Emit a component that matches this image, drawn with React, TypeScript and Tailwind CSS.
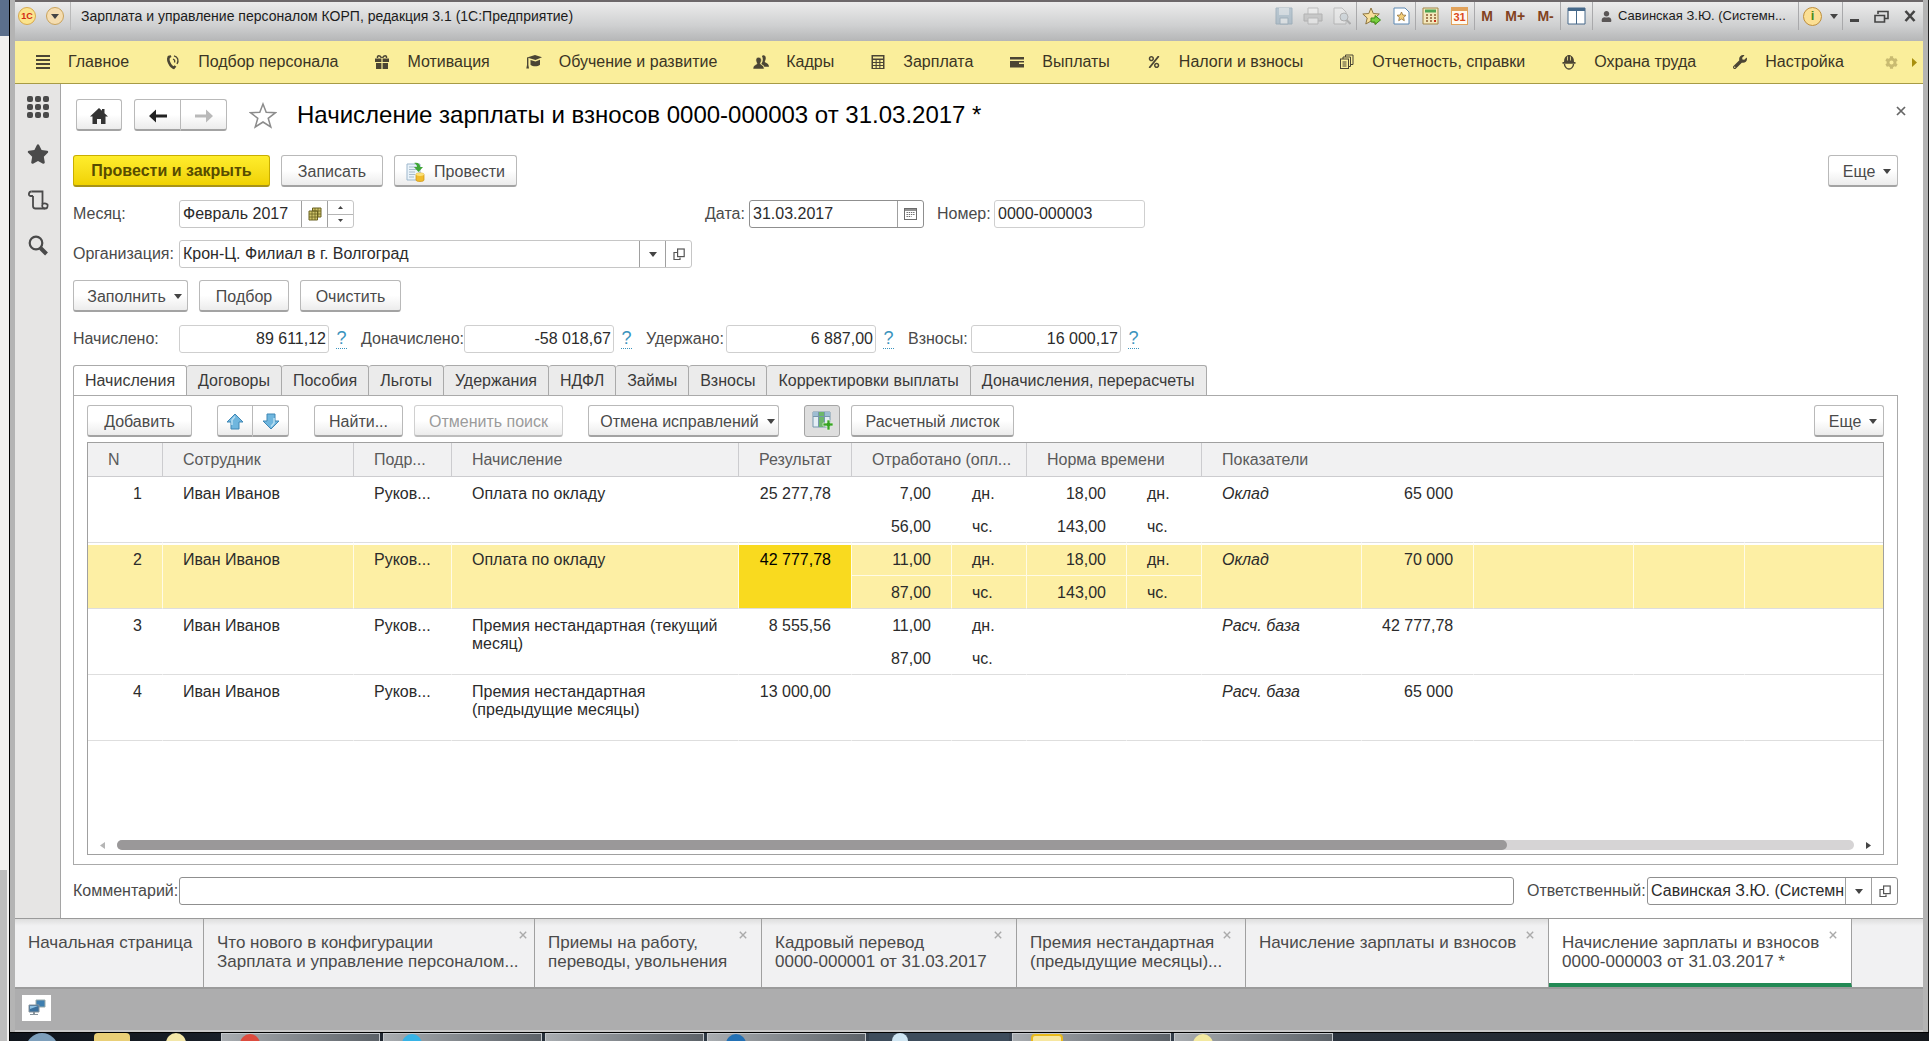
import type { ReactNode } from 'react'
import { FaStar, FaPercent, FaWrench, FaCog, FaUser } from 'react-icons/fa'
import { clsx } from 'clsx'

/* ---------- icons ---------- */

const Caret = () => (
  <svg width="8" height="5" viewBox="0 0 8 5" className="shrink-0">
    <path d="M0 0h8L4 5z" fill="#444" />
  </svg>
)

const OpenIcon = () => (
  <svg width="12" height="13" viewBox="0 0 12 13" fill="none" stroke="#555" strokeWidth="1.2">
    <rect x="4.6" y="1" width="6.6" height="7.6" />
    <path d="M4 4.5H1v7h6V9.5" />
  </svg>
)

const CloseIcon = ({ size, color }: { size: number; color: string }) => (
  <svg width={size} height={size} viewBox="0 0 8 8" stroke={color} strokeWidth="1.4">
    <path d="M.8.8l6.4 6.4M7.2.8L.8 7.2" />
  </svg>
)

const MenuIcon = () => (
  <svg width="16" height="16" viewBox="0 0 16 16" fill="#4b4534">
    <path d="M1 1h14v2H1zM1 5h14v2H1zM1 9h14v2H1zM1 13h14v2H1z" />
  </svg>
)

const PhoneIcon = () => (
  <svg width="16" height="16" viewBox="0 0 16 16" fill="none" stroke="#4b4534">
    <path d="M4.5 2.5C1.5 5 5 13 9.500 14" strokeWidth="2.600" />
    <path d="M3 3.500l3-1.500M8 14.500l2.500-2.500" strokeWidth="2.400" />
    <path d="M8 5c1.500.5 2 2 1.500 3.500M9 1.800c4 .8 5 5 3 8.200" strokeWidth="1.300" />
  </svg>
)

const GiftIcon = () => (
  <svg width="16" height="16" viewBox="0 0 16 16" fill="#4b4534">
    <path d="M1 4.500h6.400V8H1zM8.600 4.500H15V8H8.600zM2 9h5.400v6H2zM8.600 9H14v6H8.600z" />
    <path d="M7.400 4C6.500 1 3 .8 3.500 4M8.600 4C9.500 1 13 .8 12.500 4" fill="none" stroke="#4b4534" strokeWidth="1.500" />
  </svg>
)

const CapIcon = () => (
  <svg width="16" height="16" viewBox="0 0 16 16" fill="#4b4534">
    <path d="M1 3.500L9 1l7 2.300L9.500 6z" />
    <path d="M4.500 6l5 1.500L14 5.700v5c-2.500 2-7 2-9.500 0z" />
    <path d="M1 3.500h1.400V11L3 14.500H.3L1 11z" />
  </svg>
)

const PeopleIcon = () => (
  <svg width="17" height="16" viewBox="0 0 17 16" fill="#4b4534">
    <path d="M9.500 1.500c2-1.500 4.500 0 4 3-.2 1.800-.8 2.300-1 3.200 0 1 4.500 1.300 4.500 5.300h-5c-.5-1.500-2-2.300-3.200-3 1.800-2 2.200-6 .7-8.500z" />
    <path d="M6 3c2.300 0 3.200 2 2.800 4-.2 1.200-.8 1.700-1 2.500 0 1.500 4 1.500 4 6H0c0-4.500 4-4.500 4.200-6-.2-.8-.8-1.300-1-2.500C2.800 5 3.700 3 6 3z" stroke="#faee9b" strokeWidth=".6" />
  </svg>
)

const CalcIcon = () => (
  <svg width="16" height="16" viewBox="0 0 16 16">
    <path d="M1.500 1h13v14h-13z" fill="#4b4534" />
    <path
      d="M3 2.500h10v2H3zM3 6h2.600v2H3zM6.700 6h2.600v2H6.700zM10.400 6H13v2h-2.600zM3 9h2.600v2H3zM6.700 9h2.600v2H6.700zM10.400 9H13v2h-2.600zM3 12h2.600v2H3zM6.700 12h2.600v2H6.700zM10.400 12H13v2h-2.600z"
      fill="#faee9b"
    />
  </svg>
)

const CardIcon = () => (
  <svg width="16" height="16" viewBox="0 0 16 16" fill="#4b4534">
    <path d="M1 3h14v2.500H1zM1 7h14v6.500H1z" />
    <path d="M10 8.500h5v1.500h-5z" fill="#faee9b" />
  </svg>
)

const ReportIcon = () => (
  <svg width="16" height="16" viewBox="0 0 16 16" fill="none" stroke="#4b4534">
    <rect x="1.500" y="5" width="8" height="9.500" />
    <path d="M4 5V3h7.500v9.500H10M6.500 3V1H14v9.500h-2M3.500 8h4M3.500 10h4M3.500 12h4" />
  </svg>
)

const HelmetIcon = () => (
  <svg width="14" height="16" viewBox="0 0 14 16">
    <path d="M2 8c0-4 1.500-6 3.500-6.500V1h3v.5C10.500 2 12 4 12 8h1.500v1.800H.5V8z" fill="#4b4534" />
    <path d="M5.500 2.500v4M8.500 2.500v4" stroke="#faee9b" strokeWidth=".8" />
    <path d="M2.500 10c0 3 2.500 5 4.500 5s4.500-2 4.500-5" fill="none" stroke="#4b4534" strokeWidth="1.400" />
  </svg>
)

const HomeIcon = () => (
  <svg width="18" height="16" viewBox="0 0 18 16" fill="#333">
    <path d="M9 0l3 2.800V1h2.500v4.200L18 8.500h-2.500V16h-4.500v-5H7v5H2.500V8.500H0z" />
  </svg>
)

const StarOutline = () => (
  <svg width="28" height="27" viewBox="0 0 28 27" fill="none" stroke="#8c8c8c" strokeWidth="1.500">
    <path d="M14 2l3.200 8.300 9.300.4-7.300 5.600 2.600 8.700L14 20l-7.800 5 2.600-8.700-7.300-5.600 9.300-.4z" />
  </svg>
)

const GridIcon = () => (
  <svg width="22" height="22" viewBox="0 0 22 22" fill="#4a4a4a">
    {[3, 11, 19].map((y) => [3, 11, 19].map((x) => <rect key={`${x}${y}`} x={x - 3} y={y - 3} width="6" height="6" rx="2" />))}
  </svg>
)

const ScrollIcon = () => (
  <svg width="22" height="20" viewBox="0 0 22 20" fill="none" stroke="#4a4a4a" strokeWidth="1.800">
    <path d="M6 6V16c0 1.800 1 2.500 2.500 2.500H18M4.500 1.500h11v12.500" />
    <path d="M4.500 1.500C1.500 1.500 1 6 3.500 6H6M15.500 14c-1 3 .5 4.500 2.500 4.500s3-1 2.500-4c-1.500-1-3.500-1.500-5-.5z" />
  </svg>
)

const SearchIcon = () => (
  <svg width="20" height="21" viewBox="0 0 20 21" fill="none" stroke="#4a4a4a">
    <circle cx="8" cy="8" r="6.300" strokeWidth="2.200" />
    <path d="M12.500 13l6 6" strokeWidth="4" />
  </svg>
)

const ArrowIcon = ({ color, flip }: { color: string; flip?: boolean }) => (
  <svg width="18" height="14" viewBox="0 0 18 14" className={clsx(flip && 'rotate-180')}>
    <path d="M0 7l7-6.500v5h11v3H7v5z" fill={color} />
  </svg>
)

const BlueArrow = ({ down }: { down?: boolean }) => (
  <svg width="18" height="17" viewBox="0 0 18 17" className={clsx(down && 'rotate-180')}>
    <path d="M9 1l8 8h-4v7H5V9H1z" fill="#6fb6de" stroke="#3f87b5" />
    <path d="M9 3.500L6 7v5" stroke="#b9dff2" strokeWidth="1.500" fill="none" />
  </svg>
)

const PostIcon = () => (
  <svg width="19" height="20" viewBox="0 0 19 20">
    <path d="M1 2h13v16H1z" fill="#eaf3fa" stroke="#9db7cc" />
    <path d="M3 5h8M3 7.500h8M3 10h6M3 12.500h6M3 15h5" stroke="#a8bccb" />
    <path d="M8 1c4-1 6 1 6.200 4H17l-4.500 5L8 5h3c0-2-1-3-3-4z" fill="#3fa535" />
    <path d="M10 12.500c0-2 8-2 8 0V18c0 2-8 2-8 0z" fill="#f0bc2e" stroke="#cf9413" strokeWidth=".7" />
    <ellipse cx="14" cy="12.500" rx="4" ry="1.400" fill="#fbe27a" />
  </svg>
)

const TableAddIcon = () => (
  <svg width="21" height="20" viewBox="0 0 21 20">
    <path d="M1 1h17v15H1z" fill="#e4eef5" stroke="#7697ad" />
    <path d="M1 1h17v4H1z" fill="#9dbdd2" />
    <path d="M7 1h5v15H7z" fill="#6cb76a" />
    <path d="M1 5.500h17M6.500 1v15M12.500 1v15" stroke="#7697ad" />
    <path d="M15 9h3v3h3v3h-3v4h-3v-4h-4v-3h4z" fill="#37a423" stroke="#e5f5e1" strokeWidth=".7" />
  </svg>
)

const SheetsIcon = () => (
  <svg width="14" height="14" viewBox="0 0 14 14" stroke="#6b6222">
    <path d="M4.500 1h8.500v9H4.500z" fill="#cfc46a" />
    <path d="M1 4h8.500v9H1z" fill="#cfc46a" />
    <path d="M1 7h12M1 10h8.500M4 4v9M7 1v12M10 1v9M4.500 4H13" strokeWidth=".8" />
  </svg>
)

const CalendarIcon = () => (
  <svg width="13" height="12" viewBox="0 0 13 12" fill="none" stroke="#6b6b6b">
    <rect x=".5" y=".5" width="12" height="11" />
    <path d="M1 2h11" strokeWidth="1.500" />
    <path d="M2.500 4.500h8M2.500 6.500h8M2.500 8.500h5" strokeDasharray="1.400 .8" />
  </svg>
)

const Logo = () => (
  <span className="flex size-[18px] items-center justify-center rounded-full border border-[#d8a94e] bg-[#fbe48c] text-[9px] font-bold text-[#d22a14]">
    1С
  </span>
)

/* ---------- shared controls ---------- */

const buttonBase =
  'flex h-8 shrink-0 items-center justify-center rounded-[3px] border border-b-2 bg-linear-to-b from-white from-50% to-[#ececec] whitespace-nowrap pt-0.5'

function Button({ children, className, disabled, label }: { children: ReactNode; className?: string; disabled?: boolean; label?: string }) {
  return (
    <button
      type="button"
      disabled={disabled}
      aria-label={label}
      className={clsx(
        buttonBase,
        className,
        disabled ? 'border-[#d0d0d0] border-b-[#bdbdbd] text-[#9b9b9b]' : 'border-[#b9b9b9] border-b-[#a3a3a3] text-[#4a4a4a]',
      )}
    >
      {children}
    </button>
  )
}

const boxBase = 'flex h-7 items-stretch overflow-hidden rounded-[3px] border bg-white text-[#2b2b2b]'
const cellBase = 'flex w-[26px] shrink-0 items-center justify-center border-l border-[#a0a0a0]'

function Total({ id, label, value, className }: { id: string; label: string; value: string; className?: string }) {
  return (
    <div className="flex items-center">
      <label htmlFor={id} className={className}>
        {label}
      </label>
      <input id={id} readOnly defaultValue={value} className="h-7 w-[150px] rounded-[3px] border border-[#cfcfcf] bg-white pr-0.5 text-right text-[#2b2b2b]" />
      <a href="#" className="mr-[14px] ml-[7px] h-5 w-[11px] border-b border-dotted border-[#3a93bd] text-center text-[18px] leading-[18px] text-[#3a93bd]">
        ?
      </a>
    </div>
  )
}

/* ---------- data ---------- */

const sections: { icon: ReactNode; title: string }[] = [
  { icon: <MenuIcon />, title: 'Главное' },
  { icon: <PhoneIcon />, title: 'Подбор персонала' },
  { icon: <GiftIcon />, title: 'Мотивация' },
  { icon: <CapIcon />, title: 'Обучение и развитие' },
  { icon: <PeopleIcon />, title: 'Кадры' },
  { icon: <CalcIcon />, title: 'Зарплата' },
  { icon: <CardIcon />, title: 'Выплаты' },
  { icon: <FaPercent size={12} />, title: 'Налоги и взносы' },
  { icon: <ReportIcon />, title: 'Отчетность, справки' },
  { icon: <HelmetIcon />, title: 'Охрана труда' },
  { icon: <FaWrench size={14} />, title: 'Настройка' },
]

const tabs = [
  'Начисления',
  'Договоры',
  'Пособия',
  'Льготы',
  'Удержания',
  'НДФЛ',
  'Займы',
  'Взносы',
  'Корректировки выплаты',
  'Доначисления, перерасчеты',
]

const rows = [
  { n: 1, kind: 'Оплата по окладу', result: '25 277,78', days: '7,00', hours: '56,00', normDays: '18,00', normHours: '143,00', name: 'Оклад', value: '65 000' },
  { n: 2, kind: 'Оплата по окладу', result: '42 777,78', days: '11,00', hours: '87,00', normDays: '18,00', normHours: '143,00', name: 'Оклад', value: '70 000', selected: true },
  { n: 3, kind: 'Премия нестандартная (текущий месяц)', result: '8 555,56', days: '11,00', hours: '87,00', name: 'Расч. база', value: '42 777,78' },
  { n: 4, kind: 'Премия нестандартная (предыдущие месяцы)', result: '13 000,00', name: 'Расч. база', value: '65 000' },
]

const openWindows = [
  { title: 'Начальная страница', width: 'w-[189px]' },
  { title: 'Что нового в конфигурации\nЗарплата и управление персоналом...', width: 'w-[331px]', closable: true },
  { title: 'Приемы на работу,\nпереводы, увольнения', width: 'w-[227px]', closable: true },
  { title: 'Кадровый перевод\n0000-000001 от 31.03.2017', width: 'w-[255px]', closable: true },
  { title: 'Премия нестандартная\n(предыдущие месяцы)...', width: 'w-[229px]', closable: true },
  { title: 'Начисление зарплаты и взносов', width: 'w-[303px]', closable: true },
  { title: 'Начисление зарплаты и взносов\n0000-000003 от 31.03.2017 *', width: 'w-[303px]', closable: true, active: true },
]

/* ---------- page parts ---------- */

function TitleBar() {
  const group = 'flex h-7 items-center justify-around border-l border-[#a9a9ab]'
  return (
    <header className="flex h-[41px] items-start border-t-2 border-[#6d686a] bg-linear-to-b from-[#ececec] via-[#cfd0d1] via-60% to-[#b5b6b7] text-sm text-[#1c1c1c]">
      <div className="flex h-7 items-center gap-1.5 pl-[3px]">
        <Logo />
        <button type="button" aria-label="Меню" className="ml-1 flex size-[18px] items-center justify-center rounded-full border border-[#c9a35c] bg-[#f5ddb0]">
          <Caret />
        </button>
        <h1 className="flex h-7 items-center border-l border-[#b9b9b9] pl-2.5 whitespace-nowrap">
          Зарплата и управление персоналом КОРП, редакция 3.1 (1С:Предприятие)
        </h1>
      </div>
      <div className="ml-auto flex">
        <div className="flex h-7 w-[86px] items-center justify-around opacity-50">
          <svg width="18" height="18" viewBox="0 0 18 18">
            <path d="M1 1h16v16H1z" fill="#8fabbf" stroke="#6d8ba1" />
            <path d="M4 1h10v7H4z" fill="#c9d7e0" />
            <path d="M5 11h8v6H5z" fill="#dfe7ec" stroke="#6d8ba1" />
          </svg>
          <svg width="20" height="18" viewBox="0 0 20 18">
            <path d="M5 1h10v7H5z" fill="#f3f3f3" stroke="#999" />
            <path d="M1 7h18v7H1z" fill="#b5b5b5" stroke="#8a8a8a" />
            <path d="M5 11h10v6H5z" fill="#eee" stroke="#999" />
          </svg>
          <svg width="18" height="18" viewBox="0 0 18 18">
            <path d="M1 1h8l4 4v12H1z" fill="#eee" stroke="#999" />
            <circle cx="11" cy="10" r="4" fill="#c4d0d8" stroke="#888" />
            <path d="M13.500 13l4 4" stroke="#888" strokeWidth="2" />
          </svg>
        </div>
        <div className={clsx(group, 'w-[59px]')}>
          <svg width="20" height="19" viewBox="0 0 20 19">
            <path d="M9 1l2.300 5.500 6 .5-4.500 4 1.400 6L9 14l-5.200 3 1.400-6L.8 7l6-.5z" fill="#f7df9c" stroke="#8d7440" />
            <path d="M9 11h4V8.500l5.500 4.500-5.500 4.500V15H9z" fill="#79cf3f" stroke="#3c8a17" />
          </svg>
          <svg width="17" height="18" viewBox="0 0 17 18">
            <path d="M1 1h11l4 4v12H1z" fill="#fff" stroke="#5c89b4" />
            <path d="M8.500 5l1.300 3 3.200.3-2.400 2.200.7 3.200-2.800-1.700-2.800 1.700.7-3.200L4 8.300 7.200 8z" fill="#f4cf7a" stroke="#97743a" strokeWidth=".8" />
          </svg>
        </div>
        <div className={clsx(group, 'w-[59px]')}>
          <svg width="17" height="18" viewBox="0 0 17 18">
            <path d="M1 1h15v16H1z" fill="#f4e9bd" stroke="#a2874b" />
            <path d="M3 2.500h11v3H3z" fill="#4ea653" />
            <path d="M4 8h2M8 8h2M12 8h2M4 11h2M8 11h2M12 11h2M4 14h2M8 14h2" stroke="#8a5c33" strokeWidth="1.600" />
            <path d="M12 14h2" stroke="#c8321c" strokeWidth="2" />
          </svg>
          <span className="flex h-[18px] w-[17px] items-end justify-center border border-t-4 border-[#e2a25a] bg-[#fffaf0] text-[11px] leading-[13px] font-bold text-[#dc4a1c]">31</span>
        </div>
        <div className={clsx(group, 'w-[86px] font-bold text-[#82431f]')}>
          <button type="button">M</button>
          <button type="button">M+</button>
          <button type="button">M-</button>
        </div>
        <div className={clsx(group, 'w-8')}>
          <svg width="19" height="18" viewBox="0 0 19 18">
            <path d="M1 1h17v16H1z" fill="#fff" stroke="#46698a" />
            <path d="M1 1h17v3H1z" fill="#46698a" />
            <path d="M9.500 4v13" stroke="#46698a" />
          </svg>
        </div>
        <div className="flex h-7 w-[206px] items-center gap-1.5 border-l border-[#a9a9ab] pl-2 text-[13px] whitespace-nowrap">
          <FaUser size={11} color="#5a5656" className="shrink-0" />
          Савинская З.Ю. (Системн...
        </div>
        <div className={clsx(group, 'w-11')}>
          <span className="flex size-[19px] items-center justify-center rounded-full border border-[#bf8f3c] bg-[#fbdf94] text-[13px] leading-4 font-bold text-[#4b8a1d]">i</span>
          <Caret />
        </div>
        <div className={clsx(group, 'w-[81px]')}>
          <svg width="9" height="14" viewBox="0 0 9 14">
            <path d="M0 10h9v3H0z" fill="#444" />
          </svg>
          <svg width="15" height="13" viewBox="0 0 15 13" fill="none" stroke="#444">
            <path d="M4 4V1.500h10v7h-3" strokeWidth="1.600" />
            <path d="M1 5.500h9.500V12H1z" strokeWidth="1.600" />
          </svg>
          <svg width="12" height="12" viewBox="0 0 12 12" stroke="#444" strokeWidth="2.600">
            <path d="M1.500 1l9 10M10.500 1l-9 10" />
          </svg>
        </div>
      </div>
    </header>
  )
}

function SectionsBar() {
  return (
    <nav className="flex h-[43px] items-center gap-9 border-b border-[#a79b45] bg-[#faee9b] pr-1.5 pl-5 text-[#3b3524]">
      {sections.map((s) => (
        <a key={s.title} href="#" className="flex items-center gap-[17px] whitespace-nowrap">
          <span className="flex w-4 shrink-0 justify-center text-[#4b4534]">{s.icon}</span>
          {s.title}
        </a>
      ))}
      <span className="ml-auto flex items-center gap-3.5">
        <FaCog size={13} color="#c9bb71" />
        <svg width="5" height="9" viewBox="0 0 5 9">
          <path d="M0 0l5 4.500L0 9z" fill="#a88f0e" />
        </svg>
      </span>
    </nav>
  )
}

function SideBar() {
  return (
    <aside className="flex w-[46px] shrink-0 flex-col items-center gap-[25px] border-r border-[#a5a5a5] bg-[#e6e5e4] pt-3">
      <button type="button" aria-label="Все функции">
        <GridIcon />
      </button>
      <button type="button" aria-label="Избранное">
        <FaStar size={22} color="#4a4a4a" />
      </button>
      <button type="button" aria-label="История">
        <ScrollIcon />
      </button>
      <button type="button" aria-label="Поиск">
        <SearchIcon />
      </button>
    </aside>
  )
}

function AccrualTable() {
  return (
    <table className="w-full table-fixed border-separate border-spacing-0 text-left leading-[18px] text-[#2b2b2b]">
      <colgroup>
        <col className="w-[75px]" />
        <col className="w-[191px]" />
        <col className="w-[98px]" />
        <col className="w-[287px]" />
        <col className="w-[113px]" />
        <col className="w-[100px]" />
        <col className="w-[75px]" />
        <col className="w-[100px]" />
        <col className="w-[75px]" />
        <col className="w-[160px]" />
        <col className="w-[112px]" />
        <col className="w-[160px]" />
        <col className="w-[111px]" />
        <col />
      </colgroup>
      <thead>
        <tr className="h-[34px] bg-[#f1f1f2] text-[#5a5a5a] *:border-b *:border-[#cccccf] *:pl-5 *:font-normal *:whitespace-nowrap">
          <th className="border-r">N</th>
          <th className="border-r">Сотрудник</th>
          <th className="border-r">Подр...</th>
          <th className="border-r">Начисление</th>
          <th className="border-r">Результат</th>
          <th colSpan={2} className="border-r">Отработано (опл...</th>
          <th colSpan={2} className="border-r">Норма времени</th>
          <th colSpan={5}>Показатели</th>
        </tr>
      </thead>
      {rows.map((row) => {
        const line = row.selected ? 'border-r border-r-[#fffbe6]' : 'border-r border-r-transparent'
        const edge = 'border-b border-b-[#dedede]'
        const first = clsx('border-t-2 border-t-white pt-1.5 align-top', line)
        const full = clsx(first, edge)
        const top = clsx(first, 'px-5', row.selected && 'border-b border-b-[#fffbe6]')
        const bottom = clsx('px-5 pt-2 align-top', line, edge)
        return (
          <tbody key={row.n} className={clsx(row.selected && 'bg-[#fdefa4]')}>
            <tr className="h-[33px]">
              <td rowSpan={2} className={clsx(full, 'px-5 text-right')}>{row.n}</td>
              <td rowSpan={2} className={clsx(full, 'px-5')}>Иван Иванов</td>
              <td rowSpan={2} className={clsx(full, 'pl-5 whitespace-nowrap')}>Руков...</td>
              <td rowSpan={2} className={clsx(full, 'pr-3 pl-5')}>{row.kind}</td>
              <td rowSpan={2} className={clsx(full, 'px-5 text-right whitespace-nowrap', row.selected && 'bg-[#f9da1f] text-black')}>{row.result}</td>
              <td className={clsx(top, 'text-right')}>{row.days}</td>
              <td className={top}>{row.days && 'дн.'}</td>
              <td className={clsx(top, 'text-right')}>{row.normDays}</td>
              <td className={top}>{row.normDays && 'дн.'}</td>
              <td rowSpan={2} className={clsx(full, 'px-5 italic')}>{row.name}</td>
              <td rowSpan={2} className={clsx(full, 'px-5 text-right whitespace-nowrap')}>{row.value}</td>
              <td rowSpan={2} className={full} />
              <td rowSpan={2} className={full} />
              <td rowSpan={2} className={clsx(edge, 'border-t-2 border-t-white')} />
            </tr>
            <tr className="h-[33px]">
              <td className={clsx(bottom, 'text-right')}>{row.hours}</td>
              <td className={bottom}>{row.hours && 'чс.'}</td>
              <td className={clsx(bottom, 'text-right')}>{row.normHours}</td>
              <td className={bottom}>{row.normHours && 'чс.'}</td>
            </tr>
          </tbody>
        )
      })}
    </table>
  )
}

function HorizontalScroll() {
  return (
    <div className="mt-auto flex h-3.5 items-center gap-3 pr-3 pb-1 pl-3">
      <svg width="5" height="7" viewBox="0 0 5 7">
        <path d="M5 0v7L0 3.500z" fill="#b5b5b5" />
      </svg>
      <div className="h-2.5 flex-1 rounded-full bg-[#d6d4d5]">
        <div className="h-2.5 w-4/5 rounded-full bg-[#9a9899]" />
      </div>
      <svg width="5" height="7" viewBox="0 0 5 7">
        <path d="M0 0v7l5-3.500z" fill="#444" />
      </svg>
    </div>
  )
}

function Document() {
  return (
    <main className="flex flex-1 flex-col bg-white pt-[15px] pr-[25px] pb-[13px] pl-3 text-[#4a4a4a]">
      <div className="flex items-center pl-[3px]">
        <Button className="w-[46px]" label="Домой">
          <HomeIcon />
        </Button>
        <div className="ml-3 flex">
          <Button className="w-[47px] rounded-r-none" label="Назад">
            <ArrowIcon color="#222" />
          </Button>
          <Button className="w-[46px] rounded-l-none border-l-0" label="Вперед">
            <ArrowIcon color="#b9b9b9" flip />
          </Button>
        </div>
        <button type="button" aria-label="В избранное" className="ml-[22px]">
          <StarOutline />
        </button>
        <h2 className="ml-5 text-2xl leading-8 whitespace-nowrap text-black">
          Начисление зарплаты и взносов 0000-000003 от 31.03.2017 *
        </h2>
        <button type="button" aria-label="Закрыть" className="-mr-2 mb-2 ml-auto">
          <CloseIcon size={10} color="#666" />
        </button>
      </div>

      <div className="mt-6 flex items-center gap-[11px]">
        <button
          type="button"
          className="flex h-8 w-[197px] items-center justify-center rounded-[3px] border border-b-2 border-[#c9ae00] border-b-[#a89317] bg-linear-to-b from-[#ffed2b] to-[#f0d200] font-bold text-[#574c00]"
        >
          Провести и закрыть
        </button>
        <Button className="w-[102px]">Записать</Button>
        <Button className="w-[123px] gap-[9px]">
          <PostIcon />
          Провести
        </Button>
        <Button className="ml-auto w-[70px] gap-2 pl-2">
          Еще
          <Caret />
        </Button>
      </div>

      <div className="mt-[13px] flex items-center">
        <label htmlFor="month" className="w-[106px]">Месяц:</label>
        <div className={clsx(boxBase, 'w-[175px] border-[#c6c6c6]')}>
          <input id="month" defaultValue="Февраль 2017" className="min-w-0 flex-1 pl-[3px]" />
          <button type="button" aria-label="Выбрать месяц" className={cellBase}>
            <SheetsIcon />
          </button>
          <div className="flex w-[26px] flex-col border-l border-[#a0a0a0]">
            <button type="button" aria-label="Больше" className="flex flex-1 items-center justify-center border-b border-[#b5b5b5]">
              <svg width="5" height="3" viewBox="0 0 5 3">
                <path d="M0 3h5L2.500 0z" fill="#444" />
              </svg>
            </button>
            <button type="button" aria-label="Меньше" className="flex flex-1 items-center justify-center">
              <svg width="5" height="3" viewBox="0 0 5 3">
                <path d="M0 0h5L2.500 3z" fill="#444" />
              </svg>
            </button>
          </div>
        </div>
        <label htmlFor="date" className="ml-[351px] w-11">Дата:</label>
        <div className={clsx(boxBase, 'w-[175px] border-[#8f8f8f]')}>
          <input id="date" defaultValue="31.03.2017" className="min-w-0 flex-1 pl-[3px]" />
          <button type="button" aria-label="Выбрать дату" className={cellBase}>
            <CalendarIcon />
          </button>
        </div>
        <label htmlFor="number" className="ml-[13px] w-[57px]">Номер:</label>
        <input id="number" defaultValue="0000-000003" className="h-7 w-[151px] rounded-[3px] border border-[#cfcfcf] pl-[3px] text-[#2b2b2b]" />
      </div>

      <div className="mt-3 flex items-center">
        <label htmlFor="org" className="w-[106px]">Организация:</label>
        <div className={clsx(boxBase, 'w-[513px] border-[#c6c6c6]')}>
          <select id="org" className="min-w-0 flex-1 appearance-none pl-[3px]">
            <option>Крон-Ц. Филиал в г. Волгоград</option>
          </select>
          <span className={cellBase}>
            <Caret />
          </span>
          <button type="button" aria-label="Открыть организацию" className={cellBase}>
            <OpenIcon />
          </button>
        </div>
      </div>

      <div className="mt-3 flex gap-[11px]">
        <Button className="w-[115px] gap-2 pl-2">
          Заполнить
          <Caret />
        </Button>
        <Button className="w-[90px]">Подбор</Button>
        <Button className="w-[101px]">Очистить</Button>
      </div>

      <div className="mt-[13px] flex items-center">
        <Total id="accrued" label="Начислено:" value="89 611,12" className="w-[106px]" />
        <Total id="extra" label="Доначислено:" value="-58 018,67" className="w-[103px]" />
        <Total id="withheld" label="Удержано:" value="6 887,00" className="w-20" />
        <Total id="fees" label="Взносы:" value="16 000,17" className="w-[63px]" />
      </div>

      <div role="tablist" className="mt-3 flex">
        {tabs.map((tab, i) => (
          <button
            key={tab}
            type="button"
            role="tab"
            aria-selected={i === 0}
            className={clsx(
              'h-[30px] rounded-t-[3px] border-t border-r border-[#aaa] px-[11px] whitespace-nowrap text-[#3a3a3a]',
              i === 0 ? 'border-l bg-white' : 'bg-[#ebebeb]',
            )}
          >
            {tab}
          </button>
        ))}
      </div>

      <section className="flex flex-1 flex-col border border-[#aaa] px-[13px] pt-[9px] pb-[9px]">
        <div className="flex items-center">
          <Button className="w-[105px]">Добавить</Button>
          <div className="ml-[25px] flex">
            <Button className="w-9 rounded-r-none" label="Вверх">
              <BlueArrow />
            </Button>
            <Button className="w-9 rounded-l-none border-l-0" label="Вниз">
              <BlueArrow down />
            </Button>
          </div>
          <Button className="ml-[25px] w-[89px]">Найти...</Button>
          <Button className="ml-[11px] w-[149px]" disabled>Отменить поиск</Button>
          <Button className="ml-[25px] w-[191px] gap-2 pl-2">
            Отмена исправлений
            <Caret />
          </Button>
          <button
            type="button"
            aria-label="Показать колонки"
            className="ml-[25px] flex h-8 w-9 items-center justify-center rounded-[3px] border border-[#a5a5a5] bg-[#dedede]"
          >
            <TableAddIcon />
          </button>
          <Button className="ml-[11px] w-[163px]">Расчетный листок</Button>
          <Button className="ml-auto w-[70px] gap-2 pl-2">
            Еще
            <Caret />
          </Button>
        </div>
        <div className="mt-[5px] flex flex-1 flex-col border border-[#a0a0a0]">
          <AccrualTable />
          <HorizontalScroll />
        </div>
      </section>

      <div className="mt-3 flex items-center">
        <label htmlFor="comment" className="w-[106px]">Комментарий:</label>
        <input id="comment" className="h-7 flex-1 rounded-[3px] border border-[#8f8f8f] px-[3px]" />
        <label htmlFor="owner" className="ml-[13px] w-[120px]">Ответственный:</label>
        <div className={clsx(boxBase, 'w-[251px] border-[#8f8f8f]')}>
          <input id="owner" defaultValue="Савинская З.Ю. (Системный администратор)" className="min-w-0 flex-1 pl-[3px]" />
          <button type="button" aria-label="Выбрать" className={cellBase}>
            <Caret />
          </button>
          <button type="button" aria-label="Открыть ответственного" className={cellBase}>
            <OpenIcon />
          </button>
        </div>
      </div>
    </main>
  )
}

function WindowTabs() {
  return (
    <div className="flex h-[69px] border-t border-[#9a9a9a] bg-linear-to-b from-[#dedede] to-[#f1f1f2] to-10%">
      {openWindows.map((w) => (
        <div
          key={w.title}
          className={clsx(
            'flex shrink-0 items-start border-r border-[#a0a0a0] pt-3.5 pl-[13px]',
            w.width,
            w.active && 'border-b-4 border-b-[#238a55] bg-white',
          )}
        >
          <a href="#" className="text-[17px] leading-[19px] whitespace-pre text-[#4a4a4a]">{w.title}</a>
          {w.closable && (
            <button type="button" aria-label="Закрыть окно" className="-mt-3.5 mr-3.5 ml-auto flex h-8 items-center">
              <CloseIcon size={8} color="#aaa" />
            </button>
          )}
        </div>
      ))}
    </div>
  )
}

function StatusBar() {
  return (
    <footer className="flex h-[45px] items-center border-t-2 border-b-2 border-t-[#9b9b9b] border-b-[#c9c9c9] bg-[#adadae] pb-1 pl-[7px]">
      <button type="button" aria-label="Окна" className="flex h-[26px] w-[29px] items-center justify-center bg-white">
        <svg width="18" height="17" viewBox="0 0 18 17">
          <path d="M8 1h9v7H8z" fill="#3f7fb0" stroke="#9aa" />
          <path d="M1 6h10v7H1z" fill="#3a6f9c" stroke="#88949c" />
          <path d="M5 13h2v2h3v1H2v-1h3z" fill="#88949c" />
          <path d="M2 7h8l-8 3z" fill="#8fc1e2" />
        </svg>
      </button>
    </footer>
  )
}

function TaskBar() {
  const task = 'flex h-2 w-[159px] items-start overflow-hidden border border-b-0 border-[#c3c7cb] bg-linear-to-r from-[#a9adb1] to-[#5c6268] pl-[18px]'
  return (
    <div className="flex h-[9px] items-end gap-[3px] overflow-hidden border-t border-black bg-linear-to-r from-[#10151c] via-[#3a4654] to-[#15181d]">
      <div className="flex h-2 w-[208px] items-start gap-9 overflow-hidden pl-4">
        <span className="size-8 shrink-0 rounded-full bg-[#7d9fbb]" />
        <span className="h-4 w-9 shrink-0 rounded-sm bg-[#e9cf77]" />
        <span className="size-5 shrink-0 rounded-full bg-[#f3e7a8]" />
      </div>
      <div className={task}>
        <span className="size-5 shrink-0 rounded-full bg-[#dc4b3e]" />
      </div>
      <div className={task}>
        <span className="size-5 shrink-0 rounded-full bg-[#37b3e6]" />
      </div>
      <div className={task} />
      <div className={task}>
        <span className="size-5 shrink-0 rounded-full bg-[#2371b5]" />
      </div>
      <div className="flex h-2 w-[140px] items-start overflow-hidden bg-[#3d4c5b] pl-[23px]">
        <span className="size-4 shrink-0 rounded-full bg-[#cfe6f3]" />
      </div>
      <div className={task}>
        <span className="h-4 w-8 shrink-0 rounded-sm border-2 border-[#e8b91c] bg-[#f7e7a0]" />
      </div>
      <div className={task}>
        <span className="size-5 shrink-0 rounded-full bg-[#f3e9a0]" />
      </div>
    </div>
  )
}

export default function App() {
  return (
    <div className="flex min-h-screen bg-[#f1f0ef] font-['Liberation_Sans',Arial,sans-serif] text-base">
      {/* edge of the window lying behind */}
      <div className="flex w-[9px] shrink-0 flex-col">
        <div className="h-9 bg-[#5b6f8c]" />
        <div className="flex-1" />
        <div className="h-[171px] border-r-2 border-[#f1f0ef] bg-[#bdbdbd]" />
      </div>
      <div className="flex min-w-0 flex-1 flex-col border-l border-black bg-[#b4b4b4]">
        <div className="flex flex-1 flex-col border-r border-[#222] pr-[5px] pl-[5px]">
          <TitleBar />
          <SectionsBar />
          <div className="flex flex-1">
            <SideBar />
            <Document />
          </div>
          <WindowTabs />
          <StatusBar />
        </div>
        <TaskBar />
      </div>
    </div>
  )
}
